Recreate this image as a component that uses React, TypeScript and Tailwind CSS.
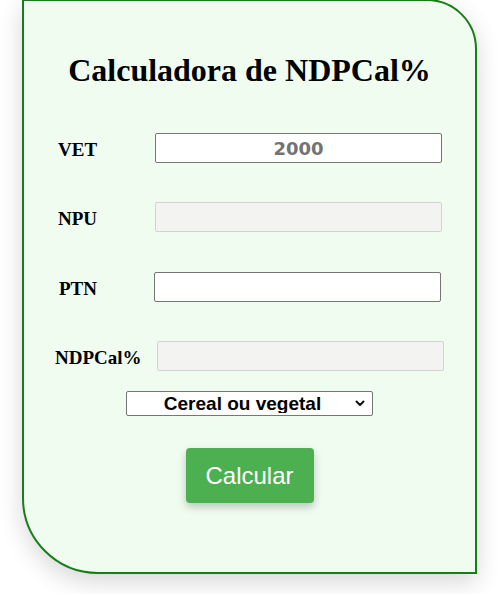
import { useState } from 'react';

const serif = "font-['Liberation_Serif','Times_New_Roman',serif]";
const sans = "font-['Liberation_Sans',Arial,sans-serif]";

function Row({ label, labelClass, inputClass, children }: { label: string; labelClass: string; inputClass: string; children: React.ReactNode }) {
  return (
    <div className="flex h-[30px] items-center">
      <label className={`${serif} ${labelClass} mt-[3px] shrink-0 text-[19px] font-bold leading-none text-black`}>{label}</label>
      <div className={`${inputClass} h-[30px] w-[287px] shrink-0`}>{children}</div>
    </div>
  );
}

export default function App() {
  const [vet, setVet] = useState('2000');
  const [ptn, setPtn] = useState('');
  const [tipo, setTipo] = useState('cereal');

  const inputBase = 'h-full w-full rounded-[2px] border outline-none';

  return (
    <div className="h-[594px] w-[502px] overflow-hidden bg-white">
      <div className="mt-[-1px] ml-[22px] flex h-[575px] w-[455px] flex-col items-stretch rounded-tr-[50px] rounded-bl-[76px] border-2 border-[#177d17] bg-[#f0fcf0] shadow-[0_8px_24px_rgba(0,0,0,0.16)]">
        <h1 className={`${serif} mt-[51px] text-center text-[32px] font-bold leading-[37px] text-black`}>Calculadora de NDPCal%</h1>

        <div className="mt-[44px]">
          <Row label="VET" labelClass="ml-[34px]" inputClass="ml-[58px]">
            <input
              value={vet}
              onChange={(e) => setVet(e.target.value)}
              className={`${inputBase} border-[#767676] bg-white text-center font-['DejaVu_Sans',Verdana,sans-serif] text-[18px] font-bold text-[#737373]`}
            />
          </Row>
        </div>

        <div className="mt-[39px]">
          <Row label="NPU" labelClass="ml-[34px]" inputClass="ml-[58px]">
            <input readOnly disabled className={`${inputBase} border-[#d3d3d3] bg-[#f3f4f2]`} />
          </Row>
        </div>

        <div className="mt-[40px]">
          <Row label="PTN" labelClass="ml-[35px]" inputClass="ml-[57px]">
            <input value={ptn} onChange={(e) => setPtn(e.target.value)} className={`${inputBase} border-[#767676] bg-white`} />
          </Row>
        </div>

        <div className="mt-[39px]">
          <Row label="NDPCal%" labelClass="ml-[31px]" inputClass="ml-[15px]">
            <input readOnly disabled className={`${inputBase} border-[#d3d3d3] bg-[#f3f4f2]`} />
          </Row>
        </div>

        <div className="relative mx-auto mt-[20px] h-[25px] w-[247px]">
          <select
            value={tipo}
            onChange={(e) => setTipo(e.target.value)}
            className={`${sans} h-full w-full appearance-none rounded-[2px] border border-[#767676] bg-white pr-[14px] text-center text-[19px] font-bold leading-none text-black [text-align-last:center]`}
          >
            <option value="cereal">Cereal ou vegetal</option>
            <option value="leguminosa">Leguminosa</option>
            <option value="animal">Animal</option>
          </select>
          <svg className="pointer-events-none absolute right-[8px] top-[9px]" width="10" height="7" viewBox="0 0 10 7" fill="none">
            <path d="M1.5 1.5 5 5l3.5-3.5" stroke="#111" strokeWidth="2" strokeLinecap="round" strokeLinejoin="round" />
          </svg>
        </div>

        <button
          className={`${sans} mx-auto mt-[32px] h-[55px] w-[128px] rounded-[4px] bg-[#4caf50] text-[24px] text-white shadow-[0_4px_8px_rgba(0,0,0,0.22)]`}
        >
          Calcular
        </button>
      </div>
    </div>
  );
}
